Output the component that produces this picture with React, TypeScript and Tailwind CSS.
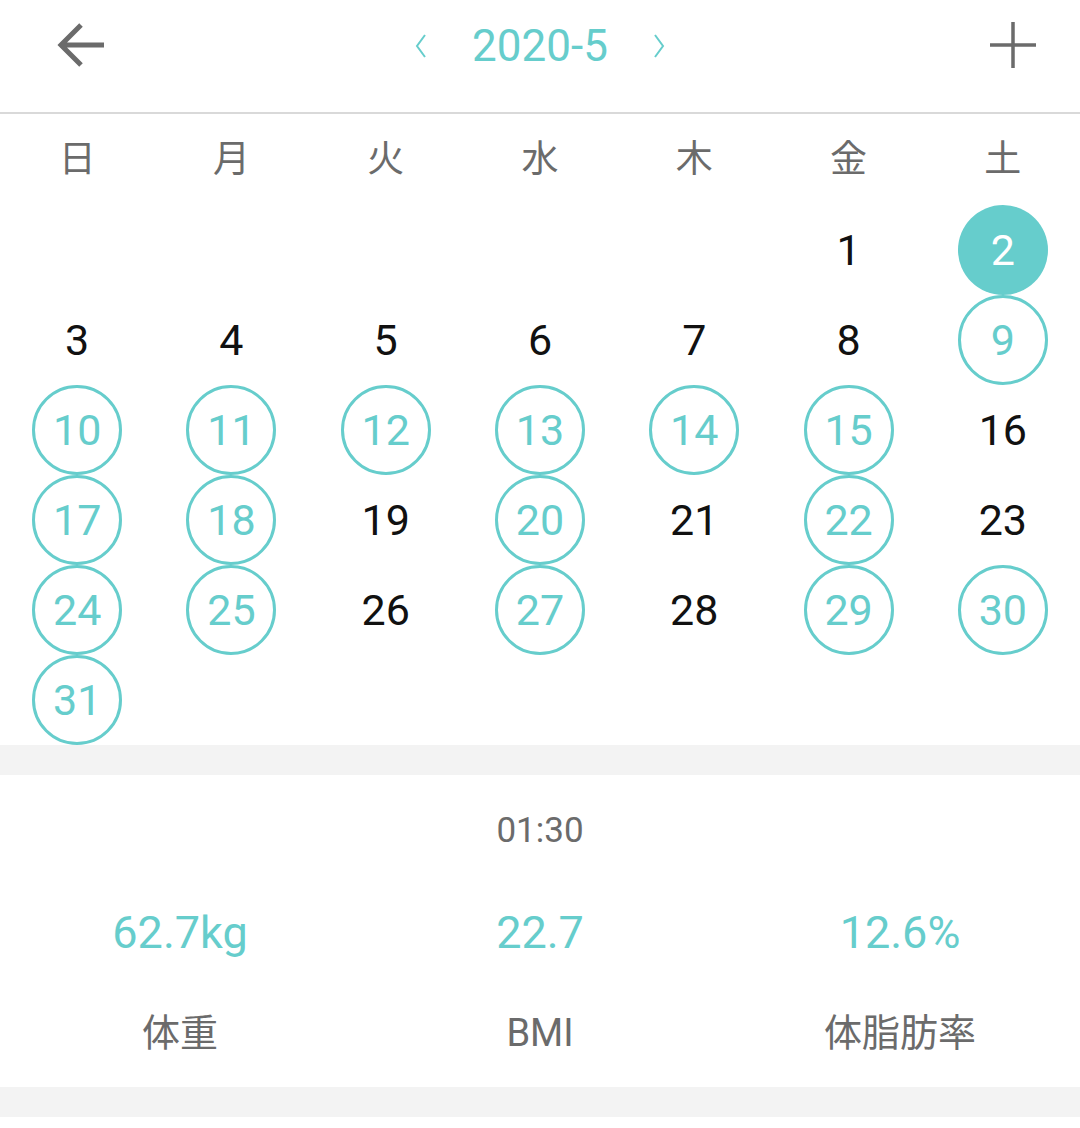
import { useMemo } from 'react';

const TEAL = 'text-[#66cdcc]';
const WEEKDAYS = ['日', '月', '火', '水', '木', '金', '土'];

// days with a measurement recorded; 2 is the selected day
const marked = new Set([2, 9, 10, 11, 12, 13, 14, 15, 17, 18, 20, 22, 24, 25, 27, 29, 30, 31]);
const selected = 2;

function Header() {
  return (
    <div className="h-[114px] flex items-start border-b-2 border-[#d9d9d9] pl-[56px] pr-[44px] pt-[22px]">
      <div className="flex-1">
        <svg width="50" height="46" viewBox="0 0 50 46">
          <path d="M48 23H7M25 3L5 23l20 20" fill="none" stroke="#6b6b6b" strokeWidth="5" />
        </svg>
      </div>
      <div className="flex items-center gap-[45px] -ml-[12px]">
        <svg width="14" height="26" viewBox="0 0 14 26">
          <path d="M12 2L4 13l8 11" fill="none" stroke="#66cdcc" strokeWidth="2" />
        </svg>
        <span className={`text-[44px] leading-[48px] ${TEAL}`}>2020-5</span>
        <svg width="14" height="26" viewBox="0 0 14 26">
          <path d="M2 2l8 11-8 11" fill="none" stroke="#66cdcc" strokeWidth="2" />
        </svg>
      </div>
      <div className="flex-1 flex justify-end">
        <svg width="46" height="46" viewBox="0 0 46 46">
          <path d="M23 0v46M0 23h46" fill="none" stroke="#6b6b6b" strokeWidth="3.5" />
        </svg>
      </div>
    </div>
  );
}

function Calendar() {
  const cells = useMemo(() => {
    const list: (number | null)[] = Array(5).fill(null);
    for (let d = 1; d <= 31; d++) list.push(d);
    return list;
  }, []);

  return (
    <div>
      <div className="grid grid-cols-7 h-[91px] items-center">
        {WEEKDAYS.map((w) => (
          <div key={w} className="text-center text-[37px] leading-[44px] text-[#6b6b6b]">{w}</div>
        ))}
      </div>
      <div className="grid grid-cols-7">
        {cells.map((d, i) => (
          <div key={i} className="h-[90px] flex items-center justify-center">
            {d !== null && (
              <div
                className={`w-[90px] h-[90px] rounded-full flex items-center justify-center text-[43px] ${
                  d === selected
                    ? 'bg-[#66cdcc] text-white'
                    : marked.has(d)
                    ? 'border-[3px] border-[#66cdcc] text-[#66cdcc]'
                    : 'text-[#111]'
                }`}
              >
                {d}
              </div>
            )}
          </div>
        ))}
      </div>
    </div>
  );
}

function Summary() {
  const stats = [
    { value: '62.7kg', label: '体重' },
    { value: '22.7', label: 'BMI' },
    { value: '12.6%', label: '体脂肪率' },
  ];
  return (
    <div className="bg-white h-[312px] pt-[36px]">
      <div className="text-center text-[35px] leading-[40px] text-[#6b6b6b]">01:30</div>
      <div className="grid grid-cols-3 mt-[56px]">
        {stats.map((s) => (
          <div key={s.label} className="flex flex-col items-center">
            <span className={`text-[45px] leading-[52px] ${TEAL}`}>{s.value}</span>
            <span className="text-[38px] leading-[44px] text-[#6b6b6b] mt-[52px]">{s.label}</span>
          </div>
        ))}
      </div>
    </div>
  );
}

export default function App() {
  return (
    <div
      className="w-[1080px] min-h-[1128px] bg-white"
      style={{ fontFamily: 'Roboto, "Noto Sans CJK JP", sans-serif' }}
    >
      <Header />
      <Calendar />
      <div className="h-[30px] bg-[#f3f3f3]" />
      <Summary />
      <div className="h-[30px] bg-[#f3f3f3]" />
    </div>
  );
}
